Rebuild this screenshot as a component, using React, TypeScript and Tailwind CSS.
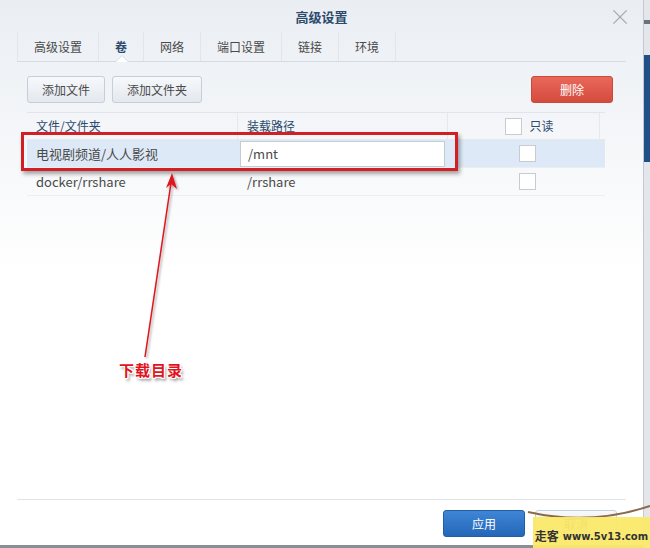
import React from 'react';

const tabs = ['高级设置', '卷', '网络', '端口设置', '链接', '环境'];

const rows = [
  { path: '电视剧频道/人人影视', mount: '/mnt', selected: true },
  { path: 'docker/rrshare', mount: '/rrshare', selected: false },
];

const font = { fontFamily: '"Noto Sans CJK SC", "Liberation Sans", sans-serif' };

const Checkbox = () => (
  <span className="inline-block w-[17px] h-[17px] border border-[#c8ccd2] bg-white" />
);

const App: React.FC = () => {
  return (
    <div className="relative w-[650px] h-[548px] overflow-hidden bg-white text-[12px] text-[#4a4a4a]" style={font}>
      {/* window behind on the right */}
      <div className="absolute right-0 top-0 w-[7px] h-full bg-[#e3e6ea] border-l border-[#c4c9cf]">
        <div className="h-[20px]" />
        <div className="h-[4px] bg-[#6a737d]" />
        <div className="h-[31px]" />
        <div className="h-[107px] bg-[#1f4f86]" />
      </div>

      <div className="w-[643px] h-full flex flex-col bg-gradient-to-b from-[#eaeef3] via-white to-white">
        {/* title */}
        <div className="relative h-[32px] flex items-center justify-center">
          <span className="text-[13px] font-bold text-[#2d4a6c] mt-[2px]">高级设置</span>
          <span className="absolute right-[12px] top-[4px] text-[22px] leading-none text-[#a3a9b0] font-light">×</span>
        </div>

        {/* tabs */}
        <div className="relative mx-[17px] h-[30px] flex items-stretch border-b border-[#d6dbe1]">
          {tabs.map((t, i) => (
            <div
              key={t}
              className={`flex items-center border-l border-[#e2e5e9] px-[16px] ${i === tabs.length - 1 ? 'border-r' : ''} ${
                t === '卷' ? 'font-bold text-[#2d4a6c]' : 'text-[#4a4a4a]'
              }`}
            >
              {t}
            </div>
          ))}
          {/* notch under active tab */}
          <div className="absolute left-[98px] bottom-[-1px] w-0 h-0 border-l-[7px] border-r-[7px] border-b-[7px] border-l-transparent border-r-transparent border-b-[#d6dbe1]" />
          <div className="absolute left-[99px] bottom-[-1px] w-0 h-0 border-l-[6px] border-r-[6px] border-b-[6px] border-l-transparent border-r-transparent border-b-white" />
        </div>

        {/* toolbar */}
        <div className="flex items-center mt-[14px] ml-[27px] mr-[30px] h-[27px]">
          <button className="h-[27px] px-[14px] rounded-[3px] border border-[#c6ced8] bg-gradient-to-b from-[#f7f9fb] to-[#e3e8ee] text-[#4a4a4a]">
            添加文件
          </button>
          <button className="ml-[7px] h-[27px] px-[14px] rounded-[3px] border border-[#c6ced8] bg-gradient-to-b from-[#f7f9fb] to-[#e3e8ee] text-[#4a4a4a]">
            添加文件夹
          </button>
          <div className="flex-1" />
          <button className="w-[82px] h-[27px] rounded-[3px] border border-[#c9493c] bg-gradient-to-b from-[#e9685a] to-[#d44b3d] text-white">
            删除
          </button>
        </div>

        {/* table */}
        <div className="mt-[9px] ml-[27px] mr-[38px] border-t border-[#e1e4e8]">
          <div className="flex h-[27px] border-b border-[#e6e9ec]">
            <div className="w-[211px] pl-[9px] flex items-center text-[#2d4a6c] border-r border-[#e6e9ec]">文件/文件夹</div>
            <div className="w-[210px] pl-[9px] flex items-center text-[#2d4a6c] border-r border-[#e6e9ec]">装载路径</div>
            <div className="w-[152px] flex items-center justify-center gap-[7px] pl-[12px] text-[#2d4a6c] border-r border-[#e6e9ec]">
              <Checkbox />
              只读
            </div>
            <div className="flex-1" />
          </div>
          {rows.map((r) => (
            <div key={r.path} className={`flex h-[28px] border-b border-[#eceef1] ${r.selected ? 'bg-[#dde9f7]' : ''}`}>
              <div className="w-[211px] pl-[9px] flex items-center text-[13px]">{r.path}</div>
              <div className="w-[210px] flex items-center pl-[2px] text-[13px]">
                {r.selected ? (
                  <div className="w-[205px] h-[26px] bg-white border border-[#c4cbd4] flex items-center pl-[7px]">{r.mount}</div>
                ) : (
                  <span className="pl-[7px]">{r.mount}</span>
                )}
              </div>
              <div className="w-[152px] flex items-center justify-center pl-[6px]">
                <Checkbox />
              </div>
              <div className="flex-1" />
            </div>
          ))}
        </div>

        <div className="flex-1" />

        {/* footer */}
        <div className="mx-[17px] border-t border-[#e1e4e8] h-[46px] flex items-start justify-end pt-[10px] pr-[9px]">
          <button className="w-[82px] h-[27px] rounded-[3px] border border-[#1f5fa8] bg-gradient-to-b from-[#3f86d6] to-[#2467b8] text-white">
            应用
          </button>
          <button className="ml-[10px] w-[82px] h-[27px] rounded-[3px] border border-[#c6ced8] bg-gradient-to-b from-[#f7f9fb] to-[#e3e8ee] text-[#4a4a4a]">
            取消
          </button>
        </div>
        <div className="h-[3px] bg-[#8a8f95]" />
      </div>

      {/* annotation: red highlight box */}
      <div className="absolute left-[21px] top-[132px] w-[437px] h-[39px] border-[3px] border-[#d21f26] shadow-[2px_3px_4px_rgba(0,0,0,0.35)]" />

      {/* annotation: arrow */}
      <svg className="absolute left-0 top-0" width="650" height="548" viewBox="0 0 650 548">
        <defs>
          <filter id="sh" x="-20%" y="-20%" width="140%" height="140%">
            <feDropShadow dx="1.5" dy="1.5" stdDeviation="1" floodColor="#000" floodOpacity="0.35" />
          </filter>
        </defs>
        <g filter="url(#sh)">
          <line x1="145" y1="357" x2="171" y2="183" stroke="#e0141c" strokeWidth="1.5" />
          <polygon points="172,173 166,188 171,184 177,189" fill="#e0141c" />
        </g>
        {/* string of the sticker */}
        <path d="M528 512 Q590 526 650 506" stroke="#8a6a4a" strokeWidth="2" fill="none" />
      </svg>

      {/* annotation: label */}
      <div
        className="absolute left-[119px] top-[359px] text-[15px] font-bold text-[#e0141c] tracking-[1px]"
        style={{ textShadow: '1px 0 0 #fff, -1px 0 0 #fff, 0 1px 0 #fff, 0 -1px 0 #fff, 1px 1px 0 #fff, -1px -1px 0 #fff, 1px -1px 0 #fff, -1px 1px 0 #fff, 2px 3px 3px rgba(0,0,0,0.45)' }}
      >
        下载目录
      </div>

      {/* watermark sticker */}
      <div className="absolute left-[533px] top-[517px] w-[117px] h-[34px] bg-[#fbe96a]/95 border-b-2 border-dotted border-[#777] flex items-end justify-center pb-[7px] whitespace-nowrap">
        <span className="text-[12px] font-bold text-[#333] leading-none">走客</span>
        <span className="ml-[4px] text-[10px] font-bold text-[#333] leading-none" style={{ fontFamily: '"DejaVu Sans", sans-serif' }}>www.5v13.com</span>
      </div>
    </div>
  );
};

export default App;
